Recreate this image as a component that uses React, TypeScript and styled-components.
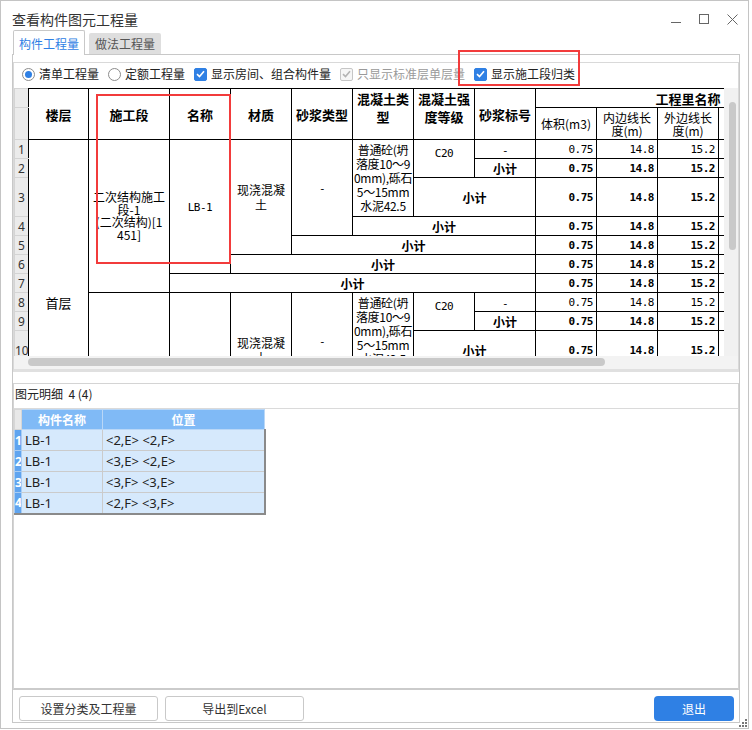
import React from 'react'
import styled, { createGlobalStyle } from 'styled-components'

const BLUE = '#2f80e4'
const UI_FONT = '"Noto Sans CJK SC", "Noto Sans", sans-serif'
const MONO_FONT = '"DejaVu Sans Mono", "Noto Sans CJK SC", monospace'

const COLS = [14, 60, 81, 61, 61, 61, 61, 61, 61, 61, 61, 61, 61, 61]
const SECTION_HEIGHTS = [19, 19, 39, 19, 19, 19, 19]
const VALUES = ['0.75', '14.8', '15.2']
const TOTALS = ['1.5', '29.6', '30.4']

const DETAILS = [
  ['LB-1', '<2,E> <2,F>'],
  ['LB-1', '<3,E> <2,E>'],
  ['LB-1', '<3,F> <3,E>'],
  ['LB-1', '<2,F> <3,F>'],
]

const GlobalStyle = createGlobalStyle`
  html, body { margin: 0; padding: 0; background: #fff; }
  body { font-family: ${UI_FONT}; font-size: 12px; color: #222; }
  * { box-sizing: border-box; }
`

const Window = styled.div`
  position: relative;
  width: 749px;
  height: 729px;
  border: 1px solid #c4c4c4;
  background: #fff;
  display: flex;
  flex-direction: column;
`
const TitleBar = styled.div`
  height: 29px;
  padding: 7px 2px 0 11px;
  display: flex;
  align-items: flex-start;
`
const Title = styled.div`
  font-size: 14px;
  line-height: 22px;
  color: #333;
`
const Controls = styled.div`
  margin-left: auto;
  display: flex;
`
const CtrlBtn = styled.div`
  width: 28px;
  height: 22px;
  display: flex;
  align-items: center;
  justify-content: center;
`
const TabRow = styled.div`
  height: 24px;
  display: flex;
  align-items: flex-end;
  gap: 4px;
  padding-left: 12px;
  position: relative;
  z-index: 1;
`
const Tab = styled.div<{ $active?: boolean }>`
  width: 72px;
  height: ${p => (p.$active ? 25 : 21)}px;
  margin-bottom: ${p => (p.$active ? -1 : 0)}px;
  display: flex;
  align-items: center;
  justify-content: center;
  font-size: 12px;
  color: ${p => (p.$active ? BLUE : '#555')};
  background: ${p => (p.$active ? '#fff' : '#dedede')};
  border: ${p => (p.$active ? '1px solid #c8c8c8' : 'none')};
  border-bottom: none;
  border-radius: 2px 2px 0 0;
`
const Panel = styled.div`
  flex: 1;
  margin: 0 8px 5px 11px;
  border: 1px solid #c8c8c8;
  padding-top: 7px;
  display: flex;
  flex-direction: column;
`
const QueryBox = styled.div`
  border: 1px solid #d9d9d9;
  border-bottom: 3px solid #e0e0e0;
`
const Options = styled.div`
  height: 25px;
  padding: 0 0 3px 8px;
  display: flex;
  align-items: center;
  gap: 9px;
`
const Option = styled.label<{ $disabled?: boolean }>`
  display: flex;
  align-items: center;
  gap: 4px;
  font-size: 12px;
  line-height: 16px;
  color: ${p => (p.$disabled ? '#9a9a9a' : '#222')};
  white-space: nowrap;
`
const Radio = styled.span<{ $on?: boolean }>`
  width: 13px;
  height: 13px;
  border-radius: 50%;
  border: 1px solid #8c8c8c;
  background: #fff;
  display: inline-flex;
  align-items: center;
  justify-content: center;
  &::after {
    content: '';
    width: 7px;
    height: 7px;
    border-radius: 50%;
    background: ${p => (p.$on ? BLUE : 'transparent')};
  }
`
const Check = styled.span<{ $disabled?: boolean }>`
  width: 13px;
  height: 13px;
  border-radius: 2px;
  background: ${p => (p.$disabled ? '#f6f6f6' : BLUE)};
  border: 1px solid ${p => (p.$disabled ? '#c6c6c6' : BLUE)};
  display: inline-flex;
  align-items: center;
  justify-content: center;
`
const GridArea = styled.div`
  height: 268px;
  display: flex;
`
const Viewport = styled.div`
  flex: 1;
  overflow: hidden;
  position: relative;
`
const VTrack = styled.div`
  width: 14px;
  background: #f1f1f1;
  padding: 14px 0 0 5px;
`
const VThumb = styled.div`
  width: 7px;
  height: 148px;
  border-radius: 4px;
  background: #c9c9c9;
`
const HTrack = styled.div`
  height: 13px;
  background: #f3f3f3;
  padding: 2px 0 0 14px;
`
const HThumb = styled.div`
  width: 577px;
  height: 8px;
  border-radius: 4px;
  background: #c9c9c9;
`
const Grid = styled.table`
  border-collapse: collapse;
  table-layout: fixed;
  width: ${COLS.reduce((a, b) => a + b, 0)}px;
  font-family: ${UI_FONT};
  font-size: 12px;
  color: #000;
`
const Row = styled.tr<{ $h: number }>`
  height: ${p => p.$h}px;
`
const RowHead = styled.td`
  background: #ebebeb;
  border: 1px solid #d4d4d4;
  border-right-color: #000;
  padding: 0;
  text-align: center;
  font-family: "Noto Sans", sans-serif;
  font-size: 12px;
  color: #333;
  white-space: nowrap;
`
const Corner = styled.th`
  background: #ebebeb;
  border: 1px solid #d4d4d4;
  border-right-color: #000;
  padding: 0;
`
const HeadCell = styled.th<{ $top?: boolean; $light?: boolean }>`
  border: 1px solid #000;
  padding: ${p => (p.$top ? '1px 0 0' : '0')};
  font-weight: ${p => (p.$light ? 400 : 700)};
  font-size: ${p => (p.$light ? 12 : 13)}px;
  line-height: ${p => (p.$top ? 18 : 13)}px;
  vertical-align: ${p => (p.$top ? 'top' : 'middle')};
  text-align: center;
  white-space: nowrap;
  overflow: hidden;
`
const GroupHead = styled(HeadCell)`
  text-align: center;
`
const Cell = styled.td<{ $top?: boolean }>`
  border: 1px solid #000;
  padding: ${p => (p.$top ? '4px 1px 0' : '0 1px')};
  text-align: center;
  vertical-align: ${p => (p.$top ? 'top' : 'middle')};
  line-height: 15px;
  white-space: nowrap;
  overflow: hidden;
`
const SumCell = styled(Cell)`
  font-weight: 700;
  font-size: 12px;
`
const Num = styled.td<{ $bold?: boolean }>`
  border: 1px solid #000;
  padding: 0 3px 0 0;
  text-align: right;
  font-family: ${MONO_FONT};
  font-size: 11px;
  letter-spacing: -0.5px;
  font-weight: ${p => (p.$bold ? 700 : 400)};
  white-space: nowrap;
`
const Mono = styled.span`
  font-family: ${MONO_FONT};
  font-size: 11px;
  letter-spacing: -0.5px;
`
const FloorText = styled.span`
  font-size: 13px;
`
const Stage = styled.span`
  display: block;
  line-height: 12.5px;
  font-size: 12px;
`
const Concrete = styled.span`
  display: block;
  line-height: 14px;
  font-size: 12px;
  letter-spacing: -0.3px;
`
const Highlight = styled.div<{ $x: number; $y: number; $w: number; $h: number }>`
  position: absolute;
  left: ${p => p.$x}px;
  top: ${p => p.$y}px;
  width: ${p => p.$w}px;
  height: ${p => p.$h}px;
  border: 2px solid #f23b3b;
  pointer-events: none;
  z-index: 2;
`
const DetailBox = styled.div`
  flex: 1;
  margin-top: 11px;
  border: 1px solid #d4d4d4;
  border-bottom: 2px solid #cbcbcb;
  display: flex;
  flex-direction: column;
`
const DetailLabel = styled.div`
  height: 25px;
  padding: 0 0 6px 1px;
  display: flex;
  align-items: center;
  border-bottom: 1px solid #dadada;
  font-size: 12px;
  color: #222;
  white-space: pre;
`
const DTable = styled.table`
  border-collapse: collapse;
  table-layout: fixed;
  width: 250px;
  font-family: "Noto Sans", ${UI_FONT};
`
const DCorner = styled.th`
  background: #e8e8e8;
  border: 1px solid #d6d6d6;
  padding: 0;
`
const DHead = styled.th`
  height: 20px;
  background: #80baf6;
  border: 1px solid #b9d7f7;
  color: #fff;
  font-family: ${UI_FONT};
  font-size: 12px;
  font-weight: 700;
  padding: 0;
`
const DRowHead = styled.td<{ $last?: boolean }>`
  height: 21px;
  background: #5fa4ef;
  border: 1px solid #a9cdf3;
  border-bottom: ${p => (p.$last ? '2px solid #8a8a8a' : '1px solid #a9cdf3')};
  color: #fff;
  font-weight: 700;
  font-size: 12px;
  padding: 0;
  text-align: center;
  overflow: hidden;
`
const DCell = styled.td<{ $last?: boolean; $edge?: boolean }>`
  background: #d6e9fc;
  border: 1px solid #cbcbcb;
  border-bottom: ${p => (p.$last ? '2px solid #8a8a8a' : '1px solid #cbcbcb')};
  border-right: ${p => (p.$edge ? '2px solid #8a8a8a' : '1px solid #cbcbcb')};
  padding: 0 0 0 3px;
  font-size: 13px;
  color: #222;
  white-space: nowrap;
`
const ButtonRow = styled.div`
  height: 32px;
  padding: 6px 5px 1px 6px;
  display: flex;
  gap: 7px;
`
const Button = styled.button<{ $primary?: boolean }>`
  width: ${p => (p.$primary ? 80 : 139)}px;
  height: 25px;
  margin-left: ${p => (p.$primary ? 'auto' : '0')};
  border: ${p => (p.$primary ? 'none' : '1px solid #c9c9c9')};
  border-radius: ${p => (p.$primary ? 4 : 3)}px;
  background: ${p => (p.$primary ? BLUE : '#fff')};
  color: ${p => (p.$primary ? '#fff' : '#333')};
  font-family: ${UI_FONT};
  font-size: 12px;
  padding: 0;
`
const Grip = styled.svg`
  position: absolute;
  right: 0;
  bottom: 0;
`

const Tick = ({ color }: { color: string }) => (
  <svg width="9" height="8" viewBox="0 0 9 8">
    <path d="M1 4.2 L3.5 6.6 L8 1.3" fill="none" stroke={color} strokeWidth="1.6" />
  </svg>
)

function sectionRows(first: number, withFloor: boolean, stage: React.ReactNode) {
  return SECTION_HEIGHTS.map((h, i) => {
    const n = first + i
    return (
      <Row key={n} $h={h}>
        <RowHead>{n}</RowHead>
        {i === 0 && (
          <>
            {withFloor && (
              <Cell rowSpan={15}>
                <FloorText>首层</FloorText>
              </Cell>
            )}
            <Cell rowSpan={7}>
              <Stage>{stage}</Stage>
            </Cell>
            <Cell rowSpan={6}>
              <Mono>LB-1</Mono>
            </Cell>
            <Cell rowSpan={5}>
              现浇混凝
              <br />土
            </Cell>
            <Cell rowSpan={4}>
              <Mono>-</Mono>
            </Cell>
            <Cell rowSpan={3}>
              <Concrete>
                普通砼(坍
                <br />落度10～9
                <br />0mm),砾石
                <br />5～15mm
                <br />水泥42.5
              </Concrete>
            </Cell>
            <Cell rowSpan={2} $top>
              <Mono>C20</Mono>
            </Cell>
            <Cell>
              <Mono>-</Mono>
            </Cell>
          </>
        )}
        {i > 0 && <SumCell colSpan={i}>小计</SumCell>}
        {VALUES.map(v => (
          <Num key={v} $bold={i > 0}>
            {v}
          </Num>
        ))}
        <Cell />
        <Cell />
      </Row>
    )
  })
}

const App: React.FC = () => {
  return (
    <>
      <GlobalStyle />
      <Window>
        <TitleBar>
          <Title>查看构件图元工程量</Title>
          <Controls>
            <CtrlBtn>
              <svg width="10" height="10" viewBox="0 0 10 10">
                <path d="M0 8.5 H10" stroke="#666" strokeWidth="1" />
              </svg>
            </CtrlBtn>
            <CtrlBtn>
              <svg width="10" height="10" viewBox="0 0 10 10">
                <rect x="0.5" y="0.5" width="9" height="9" fill="none" stroke="#666" strokeWidth="1" />
              </svg>
            </CtrlBtn>
            <CtrlBtn>
              <svg width="11" height="11" viewBox="0 0 11 11">
                <path d="M0.5 0.5 L10.5 10.5 M10.5 0.5 L0.5 10.5" stroke="#666" strokeWidth="1" />
              </svg>
            </CtrlBtn>
          </Controls>
        </TitleBar>

        <TabRow>
          <Tab $active>构件工程量</Tab>
          <Tab>做法工程量</Tab>
        </TabRow>

        <Panel>
          <QueryBox>
            <Options>
              <Option>
                <Radio $on />
                清单工程量
              </Option>
              <Option>
                <Radio />
                定额工程量
              </Option>
              <Option>
                <Check>
                  <Tick color="#fff" />
                </Check>
                显示房间、组合构件量
              </Option>
              <Option $disabled>
                <Check $disabled>
                  <Tick color="#b4b4b4" />
                </Check>
                只显示标准层单层量
              </Option>
              <Option>
                <Check>
                  <Tick color="#fff" />
                </Check>
                显示施工段归类
              </Option>
            </Options>

            <GridArea>
              <Viewport>
                <Grid>
                  <colgroup>
                    {COLS.map((w, i) => (
                      <col key={i} style={{ width: w }} />
                    ))}
                  </colgroup>
                  <thead>
                    <Row $h={19}>
                      <Corner />
                      <HeadCell rowSpan={2}>楼层</HeadCell>
                      <HeadCell rowSpan={2}>施工段</HeadCell>
                      <HeadCell rowSpan={2}>名称</HeadCell>
                      <HeadCell rowSpan={2}>材质</HeadCell>
                      <HeadCell rowSpan={2}>砂浆类型</HeadCell>
                      <HeadCell rowSpan={2} $top>
                        混凝土类
                        <br />型
                      </HeadCell>
                      <HeadCell rowSpan={2} $top>
                        混凝土强
                        <br />度等级
                      </HeadCell>
                      <HeadCell rowSpan={2}>砂浆标号</HeadCell>
                      <GroupHead colSpan={5}>工程里名称</GroupHead>
                    </Row>
                    <Row $h={32}>
                      <Corner />
                      <HeadCell $light>体积(m3)</HeadCell>
                      <HeadCell $light>
                        内边线长
                        <br />度(m)
                      </HeadCell>
                      <HeadCell $light>
                        外边线长
                        <br />度(m)
                      </HeadCell>
                      <HeadCell $light />
                      <HeadCell $light />
                    </Row>
                  </thead>
                  <tbody>
                    {sectionRows(
                      1,
                      true,
                      <>
                        二次结构施工
                        <br />段-1
                        <br />(二次结构)[1
                        <br />451]
                      </>
                    )}
                    {sectionRows(8, false, '未划分')}
                    <Row $h={19}>
                      <RowHead>15</RowHead>
                      <SumCell colSpan={7}>小计</SumCell>
                      {TOTALS.map(v => (
                        <Num key={v} $bold>
                          {v}
                        </Num>
                      ))}
                      <Cell />
                      <Cell />
                    </Row>
                  </tbody>
                </Grid>
                <Highlight $x={82} $y={6} $w={135} $h={170} />
              </Viewport>
              <VTrack>
                <VThumb />
              </VTrack>
            </GridArea>
            <HTrack>
              <HThumb />
            </HTrack>
          </QueryBox>

          <DetailBox>
            <DetailLabel>图元明细  4 (4)</DetailLabel>
            <DTable>
              <colgroup>
                <col style={{ width: 7 }} />
                <col style={{ width: 81 }} />
                <col style={{ width: 162 }} />
              </colgroup>
              <thead>
                <tr>
                  <DCorner />
                  <DHead>构件名称</DHead>
                  <DHead>位置</DHead>
                </tr>
              </thead>
              <tbody>
                {DETAILS.map(([name, pos], i) => {
                  const last = i === DETAILS.length - 1
                  return (
                    <tr key={i}>
                      <DRowHead $last={last}>{i + 1}</DRowHead>
                      <DCell $last={last}>{name}</DCell>
                      <DCell $last={last} $edge>
                        {pos}
                      </DCell>
                    </tr>
                  )
                })}
              </tbody>
            </DTable>
          </DetailBox>

          <ButtonRow>
            <Button>设置分类及工程量</Button>
            <Button>导出到Excel</Button>
            <Button $primary>退出</Button>
          </ButtonRow>
        </Panel>

        <Highlight $x={457} $y={49} $w={122} $h={36} />

        <Grip width="9" height="9" viewBox="0 0 9 9">
          <rect x="6" y="0" width="2" height="2" fill="#777" />
          <rect x="3" y="3" width="2" height="2" fill="#777" />
          <rect x="6" y="3" width="2" height="2" fill="#777" />
          <rect x="0" y="6" width="2" height="2" fill="#777" />
          <rect x="3" y="6" width="2" height="2" fill="#777" />
          <rect x="6" y="6" width="2" height="2" fill="#777" />
        </Grip>
      </Window>
    </>
  )
}

export default App
